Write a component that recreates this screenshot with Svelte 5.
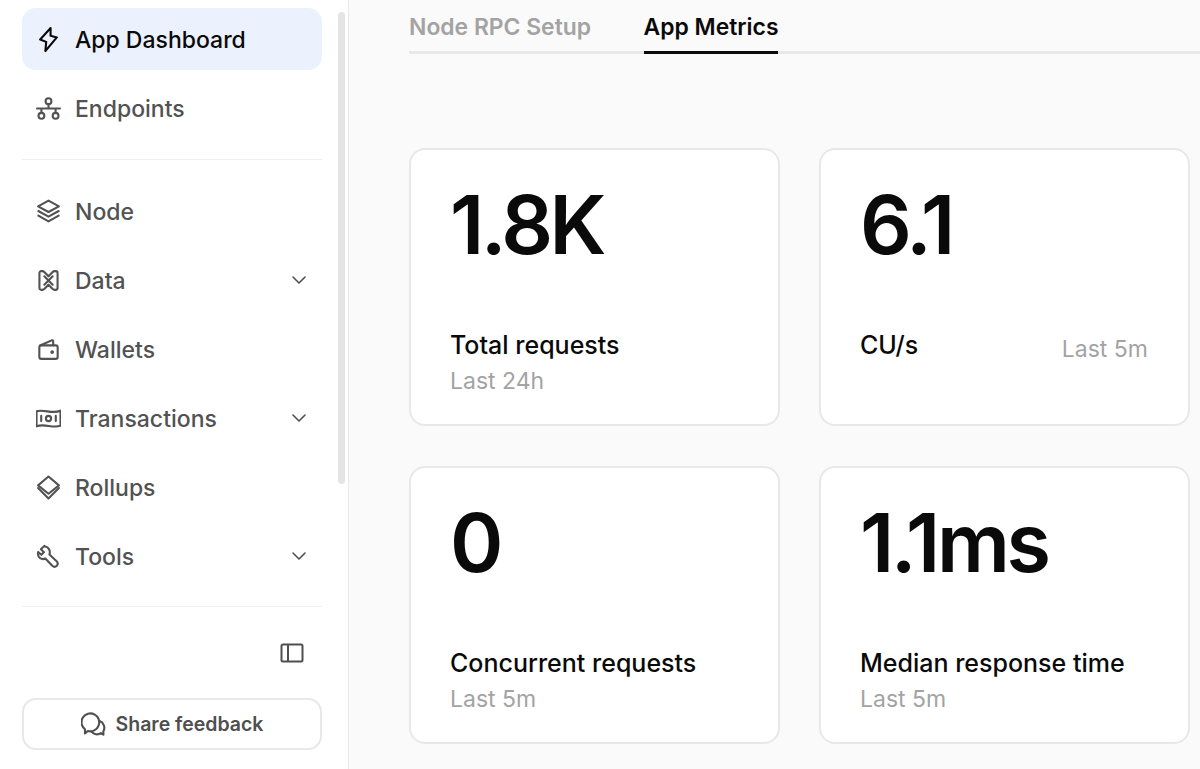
<script>
  const items = [
    { name: 'Node', id: 'node' },
    { name: 'Data', id: 'data', chev: true },
    { name: 'Wallets', id: 'wallet' },
    { name: 'Transactions', id: 'money', chev: true },
    { name: 'Rollups', id: 'rollups' },
    { name: 'Tools', id: 'tools', chev: true }
  ];
  const cards = [
    { value: '1.8K', label: 'Total requests', sub: 'Last 24h' },
    { value: '6.1', label: 'CU/s', sub: 'Last 5m', inline: true },
    { value: '0', label: 'Concurrent requests', sub: 'Last 5m' },
    { value: '1.1ms', label: 'Median response time', sub: 'Last 5m' }
  ];
</script>

{#snippet icon(id)}
  <svg class="icon" viewBox="0 0 24 24" fill="none" stroke="currentColor" stroke-width="2" stroke-linecap="round" stroke-linejoin="round">
    {#if id === 'bolt'}
      <path d="M14 1 4 12l5.800 2.300L9 23l11-13-6-1.500z" />
    {:else if id === 'endpoints'}
      <circle cx="12" cy="5" r="2.800" />
      <circle cx="5.200" cy="19" r="2.800" />
      <circle cx="18.800" cy="19" r="2.800" />
      <path d="M12 7.800V12M1 12h22M5.200 12v4.200M18.800 12v4.200" />
    {:else if id === 'node'}
      <path d="M12 1.500 22 7l-10 5.500L2 7z" />
      <path d="M2.200 11.500 12 17l9.800-5.500" />
      <path d="M2.200 16 12 21.500 21.800 16" />
    {:else if id === 'data'}
      <path d="M5 3h1c1 0 1.600.4 2.200 1L12 8l3.800-4c.6-.6 1.200-1 2.200-1h1c1 0 1.700.7 1.700 1.700v14.600c0 1-.7 1.700-1.700 1.700h-1c-1 0-1.600-.4-2.200-1L12 16l-3.800 4c-.6.6-1.200 1-2.200 1H5c-1 0-1.700-.7-1.700-1.700V4.700C3.300 3.700 4 3 5 3z" />
      <path d="M8 8 16 16M16 8 8 16" />
    {:else if id === 'wallet'}
      <path d="M5 8h14c1 0 1.800.8 1.800 1.800v9.400c0 1-.8 1.800-1.800 1.800H5c-1 0-1.800-.8-1.800-1.800V9.800C3.200 8.800 4 8 5 8z" />
      <path d="M4 8.200 15 3.200c.9-.3 1.500.2 1.500 1.100V8" />
      <circle cx="15.500" cy="14.500" r=".8" fill="currentColor" />
    {:else if id === 'money'}
      <path d="M.5 5c7.500-2 15.500 3 23-.5v14.500c-7.500 2.500-15.500-2.500-23 .5z" />
      <circle cx="12" cy="12" r="2.500" />
      <path d="M5 9.500v5M19 9.500v5" />
    {:else if id === 'rollups'}
      <path d="M12 1.500 22 10 12 18 2 10z" />
      <path d="M2 12.500 12 22.500l10-10" />
    {:else if id === 'tools'}
      <path d="M8 1.800 4.700 5.100l2.900 2.800-2.500 2.500-3-2.800C1.400 11 2.700 14.500 6.500 14.500c1 0 1.800-.2 2.500-.6l6.600 7c1.300 1.200 3.200 1.100 4.400 0 1.100-1.300 1-3.100-.2-4.300l-6.900-6.500c1.100-3.200-.4-7.400-4.900-8z" />
    {/if}
  </svg>
{/snippet}

<div class="page">
  <aside class="sidebar">
    <div class="scrollthumb"></div>
    <nav class="nav">
      <a class="item active">{@render icon('bolt')}<span>App Dashboard</span></a>
      <a class="item">{@render icon('endpoints')}<span>Endpoints</span></a>
      <hr class="rule first" />
      {#each items as it}
        <a class="item">
          {@render icon(it.id)}
          <span>{it.name}</span>
          {#if it.chev}
            <svg class="chev" viewBox="0 0 16 10" fill="none" stroke="currentColor" stroke-width="1.600" stroke-linecap="round" stroke-linejoin="round"><path d="M2 2l6 6 6-6" /></svg>
          {/if}
        </a>
      {/each}
      <hr class="rule second" />
      <div class="collapse">
        <svg viewBox="0 0 24 20" fill="none" stroke="currentColor" stroke-width="2" stroke-linejoin="round"><rect x="1.500" y="1.500" width="21" height="17" rx="1.500" /><path d="M8 1.500v17" /></svg>
      </div>
      <button class="feedback">
        <svg class="chat" viewBox="0 0 24 24" fill="none" stroke="currentColor" stroke-width="2" stroke-linecap="round" stroke-linejoin="round">
          <path d="M6.500 18.200 3.800 20.600v-4A8.500 8.500 0 1 1 16.900 13a8.500 8.500 0 0 1-10.400 5.200z" />
          <path d="M17.800 8.700a6.800 6.800 0 0 1 3.700 9.800v3.300l-2.300-1.500a6.800 6.800 0 0 1-9.100-1.400" />
        </svg>
        Share feedback
      </button>
    </nav>
  </aside>

  <main class="main">
    <div class="tabs">
      <a class="tab">Node RPC Setup</a>
      <a class="tab current">App Metrics</a>
    </div>
    <section class="grid">
      {#each cards as c}
        <article class="card">
          <div class="value">{c.value}</div>
          <div class="label" class:inline={c.inline}>
            <span class="name">{c.label}</span>
            <span class="sub">{c.sub}</span>
          </div>
        </article>
      {/each}
    </section>
  </main>
</div>

<style>
  :global(body) { margin: 0; background: #fafafa; }
  .page {
    display: flex;
    width: 1200px;
    height: 769px;
    overflow: hidden;
    font-family: Inter, "Noto Sans", sans-serif;
    background: #fafafa;
  }
  .sidebar {
    position: relative;
    flex: none;
    box-sizing: border-box;
    width: 349px;
    height: 769px;
    padding: 8px 0 0 22px;
    background: #fff;
    border-right: 1px solid #e8e8e8;
  }
  .scrollthumb {
    position: absolute;
    left: 338px;
    top: 12px;
    width: 7px;
    height: 472px;
    border-radius: 4px;
    background: #e4e4e4;
  }
  .nav { width: 300px; display: flex; flex-direction: column; }
  .item {
    display: flex;
    align-items: center;
    height: 62px;
    margin-bottom: 7px;
    padding: 0 15px 0 14px;
    border-radius: 14px;
    font-size: 23px;
    font-weight: 500;
    color: #525252;
    box-sizing: border-box;
  }
  .item span { padding-top: 2px; }
  .item.active { background: #ebf1fd; color: #0a0a0a; }
  .icon { flex: none; width: 25px; height: 25px; margin-right: 14px; }
  .chev { margin-left: auto; width: 16px; height: 10px; color: #4f4f4f; }
  .rule { width: 100%; height: 1px; border: 0; margin: 0; background: #f0f0f0; }
  .rule.first { margin-top: 13px; margin-bottom: 20px; }
  .rule.second { margin-top: 12px; }
  .collapse { display: flex; justify-content: flex-end; padding: 36px 18px 0 0; color: #4f4f4f; height: 20px; }
  .collapse svg { width: 24px; height: 20px; }
  .feedback {
    display: flex;
    align-items: center;
    justify-content: center;
    gap: 10px;
    width: 300px;
    height: 52px;
    margin-top: 35px;
    background: #fff;
    border: 2px solid #e8e8e8;
    border-radius: 14px;
    font: 600 19.500px Inter, sans-serif;
    color: #4f4f4f;
    box-sizing: border-box;
  }
  .chat { width: 25px; height: 25px; }
  .main { flex: 1; padding-left: 60px; }
  .tabs {
    display: flex;
    gap: 52.500px;
    height: 54px;
    box-sizing: border-box;
    border-bottom: 3px solid #e8e8e8;
  }
  .tab {
    height: 54px;
    box-sizing: border-box;
    padding-top: 13px;
    font-size: 22.900px;
    line-height: 28px;
    font-weight: 600;
    color: #a3a3a3;
  }
  .tab.current { color: #0a0a0a; border-bottom: 3px solid #0a0a0a; }
  .grid {
    display: grid;
    grid-template-columns: 371px 371px;
    gap: 40px 39px;
    margin-top: 94px;
  }
  .card {
    box-sizing: border-box;
    height: 278px;
    padding: 0 39px;
    background: #fff;
    border: 2px solid #e8e8e8;
    border-radius: 16px;
  }
  .value {
    padding-top: 25px;
    font-size: 81px;
    line-height: 100px;
    font-weight: 600;
    letter-spacing: -3.400px;
    color: #0a0a0a;
  }
  .label { display: flex; flex-direction: column; margin-top: 55px; }
  .label.inline { flex-direction: row; justify-content: space-between; align-items: flex-end; }
  .name { font-size: 25px; line-height: 30px; font-weight: 500; color: #0a0a0a; }
  .sub { font-size: 23px; line-height: 30px; margin-top: 6px; color: #a3a3a3; }
  .label.inline .sub { margin: 0 1px -4px 0; }
</style>
